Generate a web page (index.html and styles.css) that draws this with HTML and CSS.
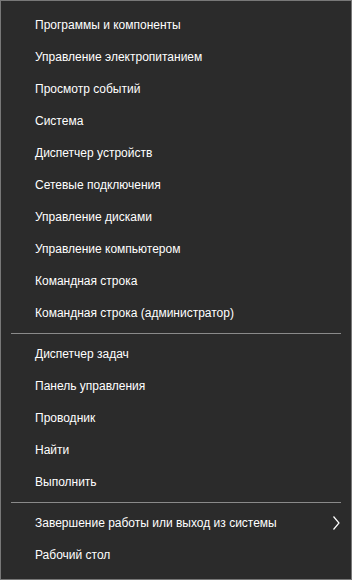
FILE: index.html
```html
<!DOCTYPE html>
<html lang="ru">
<head>
<meta charset="utf-8">
<title>Меню</title>
<link rel="stylesheet" href="styles.css">
</head>
<body>
<div class="menu">
  <div class="item">Программы и компоненты</div>
  <div class="item">Управление электропитанием</div>
  <div class="item">Просмотр событий</div>
  <div class="item">Система</div>
  <div class="item">Диспетчер устройств</div>
  <div class="item">Сетевые подключения</div>
  <div class="item">Управление дисками</div>
  <div class="item">Управление компьютером</div>
  <div class="item">Командная строка</div>
  <div class="item">Командная строка (администратор)</div>
  <div class="sep"></div>
  <div class="item">Диспетчер задач</div>
  <div class="item">Панель управления</div>
  <div class="item">Проводник</div>
  <div class="item">Найти</div>
  <div class="item">Выполнить</div>
  <div class="sep"></div>
  <div class="item sub">
    <span>Завершение работы или выход из системы</span>
    <svg class="chev" width="8" height="16" viewBox="0 0 8 16"><polyline points="1.5,1.5 7,8 1.5,14.5" fill="none" stroke="#ffffff" stroke-width="1.2"/></svg>
  </div>
  <div class="item">Рабочий стол</div>
</div>
</body>
</html>
```
FILE: styles.css
```css
html, body {
  margin: 0;
  padding: 0;
  background: #2b2b2b;
}
.menu {
  box-sizing: border-box;
  width: 352px;
  height: 580px;
  background: #2b2b2b;
  border: 1px solid #787878;
  padding-top: 8px;
  font-family: "Segoe UI", "Liberation Sans", sans-serif;
  font-size: 12px;
  color: #ffffff;
}
.item {
  height: 32px;
  display: flex;
  align-items: center;
  padding-left: 34px;
  padding-right: 11px;
  white-space: nowrap;
}
.sub {
  justify-content: space-between;
}
.chev {
  display: block;
}
.sep {
  height: 1px;
  background: #8a8a8a;
  margin: 4px 10px 4px 10px;
}
```
